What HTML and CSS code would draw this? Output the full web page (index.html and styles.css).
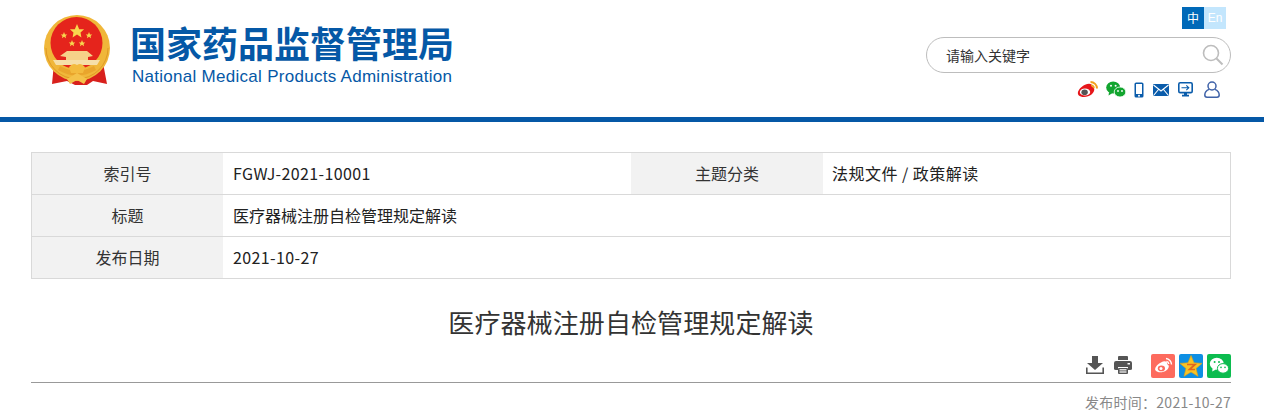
FILE: index.html
```html
<!DOCTYPE html>
<html lang="zh-CN">
<head>
<meta charset="utf-8">
<title>医疗器械注册自检管理规定解读</title>
<link rel="stylesheet" href="styles.css">
</head>
<body>
<header class="header">
  <div class="header-inner">
    <a class="brand">
      <svg class="emblem" width="68" height="72" viewBox="0 0 68 72">
        <defs>
          <path id="star" d="M0 -10 L2.9 -3.1 L9.5 -3.1 L4.7 1.2 L5.9 8.1 L0 4 L-5.9 8.1 L-4.7 1.2 L-9.5 -3.1 L-2.9 -3.1 Z" fill="#f8d64e"/>
        </defs>
        <path d="M11 48 L9 69 L24 66 L32 70 L44 70 L50 66 L64 69 L60 48 Z" fill="#d8201c"/>
        <circle cx="34" cy="33" r="33" fill="#f0b73a"/>
        <path d="M3 33 A31 31 0 0 0 65 33" fill="none" stroke="#e09a25" stroke-width="1"/>
        <circle cx="33.5" cy="28" r="26" fill="#e5241c"/>
        <path d="M17 41 L24 36 H44 L50 41 L45 42 V45 H23 V42 Z" fill="#f6d289"/>
        <path d="M10 45 H57 L54 50 H13 Z" fill="#f6dfa8"/>
        <path d="M17 51 Q34 60 51 51 L53 55 Q34 66 15 55 Z" fill="#e9a52c"/>
        <path d="M26 52 Q30 47 34 50 Q38 47 42 52 L40 58 H28 Z" fill="#f3bb3e"/>
        <path d="M24 64 L34 58 L44 64 L41 69 L34 65 L27 69 Z" fill="#f4c24a"/>
        <use href="#star" transform="translate(34 16.5) scale(.75)"/>
        <use href="#star" transform="translate(21 20.5) scale(.34)"/>
        <use href="#star" transform="translate(46 20.5) scale(.34)"/>
        <use href="#star" transform="translate(29 28.5) scale(.34)"/>
        <use href="#star" transform="translate(39 28.5) scale(.34)"/>
      </svg>
      <div class="brand-text">
        <div class="brand-cn">国家药品监督管理局</div>
        <div class="brand-en">National Medical Products Administration</div>
      </div>
    </a>
    <div class="tools">
      <div class="lang"><span class="lang-cn">中</span><span class="lang-en">En</span></div>
      <div class="search">
        <span class="search-text">请输入关键字</span>
        <svg width="22" height="22" viewBox="0 0 22 22" fill="none" stroke="#bdbdbd" stroke-width="1.6"><circle cx="9" cy="9" r="7.5"/><path d="M14.5 14.5 L20.5 20.5" stroke-width="2"/></svg>
      </div>
      <div class="socials">
        <svg class="s-weibo" width="21" height="17" viewBox="0 0 21 17"><path d="M8 3.8 C12.5 1.8 15.6 3 15.4 6 C18.4 7 17.6 11 14.5 13.6 C11 16.6 4 16.8 1.6 14.2 C-.8 11.5 3 6.2 8 3.8 Z" fill="#e6161a"/><ellipse cx="8" cy="11" rx="5.2" ry="3.6" fill="#fff"/><ellipse cx="7.6" cy="11.2" rx="3.2" ry="2.8" fill="#555"/><path d="M13.5 1 A6.5 6.5 0 0 1 20 7.5" fill="none" stroke="#f2a01e" stroke-width="2"/><path d="M14 4.4 A3 3 0 0 1 17 7.2" fill="none" stroke="#f2a01e" stroke-width="1.6"/></svg>
        <svg class="s-wechat" width="20" height="17" viewBox="0 0 20 17"><ellipse cx="7.2" cy="6.6" rx="7" ry="6" fill="#12a52f"/><path d="M3 11 L2.6 14.5 L6.5 12 Z" fill="#12a52f"/><ellipse cx="14" cy="11" rx="5.8" ry="5" fill="#12a52f" stroke="#fff" stroke-width=".8"/><circle cx="5" cy="4.8" r="1" fill="#fff"/><circle cx="9.6" cy="4.8" r="1" fill="#fff"/><circle cx="12" cy="10" r=".9" fill="#fff"/><circle cx="16" cy="10" r=".9" fill="#fff"/></svg>
        <svg class="s-phone" width="10" height="16" viewBox="0 0 10 16"><rect x=".5" y=".5" width="9" height="15" rx="1.6" fill="#0a5cab"/><rect x="2" y="2" width="6" height="10" fill="#fff"/><circle cx="5" cy="13.8" r="1" fill="#fff"/></svg>
        <svg class="s-mail" width="16" height="12" viewBox="0 0 16 12"><rect width="16" height="12" rx="1" fill="#0a5cab"/><path d="M.5 1 L8 7 L15.5 1 M.5 11.5 L5.5 5.5 M15.5 11.5 L10.5 5.5" fill="none" stroke="#fff" stroke-width="1.1"/></svg>
        <svg class="s-screen" width="15" height="15" viewBox="0 0 15 15"><rect x=".8" y=".8" width="13.4" height="9.8" rx="1.4" fill="#fff" stroke="#0a5cab" stroke-width="1.6"/><path d="M3.5 5.8 H10.5 M8.3 3.4 L10.8 5.8 L8.3 8.2" fill="none" stroke="#0a5cab" stroke-width="1.1"/><path d="M6 11 H9 V12.8 H11 V14.6 H4 V12.8 H6 Z" fill="#0a5cab"/></svg>
        <svg class="s-user" width="16" height="17" viewBox="0 0 16 17" fill="none" stroke="#3f62a8" stroke-width="1.5"><circle cx="8" cy="5" r="4"/><path d="M5.2 8.4 C2.6 9.4 .8 11.4 .8 14 Q.8 16.2 3 16.2 H13 Q15.2 16.2 15.2 14 C15.2 11.4 13.4 9.4 10.8 8.4"/></svg>
      </div>
    </div>
  </div>
</header>

<main class="main">
  <div class="meta">
    <div class="meta-label">索引号</div>
    <div class="meta-value meta-num">FGWJ-2021-10001</div>
    <div class="meta-label">主题分类</div>
    <div class="meta-value meta-last">法规文件 / 政策解读</div>
    <div class="meta-label">标题</div>
    <div class="meta-value meta-wide">医疗器械注册自检管理规定解读</div>
    <div class="meta-label">发布日期</div>
    <div class="meta-value meta-wide meta-num">2021-10-27</div>
  </div>

  <h1 class="title">医疗器械注册自检管理规定解读</h1>

  <div class="actions">
    <svg class="a-download" width="18" height="18" viewBox="0 0 18 18"><path d="M6 0 H12 V7 H17 L9 14 L1 7 H6 Z" fill="#555"/><path d="M.8 11.5 V17.2 H17.2 V11.5" fill="none" stroke="#555" stroke-width="1.6"/></svg>
    <svg class="a-print" width="18" height="18" viewBox="0 0 18 18"><path d="M5 0 H13 Q14 0 14 1 V4 H4 V1 Q4 0 5 0 Z" fill="#555"/><path d="M2 5 H16 Q18 5 18 7 V13 Q18 14 16 14 H14 V11 H4 V14 H2 Q0 14 0 13 V7 Q0 5 2 5 Z" fill="#555"/><rect x="4" y="12" width="10" height="6" rx="1" fill="#555"/><rect x="5.5" y="13.2" width="7" height="1.2" fill="#fff"/><rect x="5.5" y="15.4" width="7" height="1.2" fill="#fff"/><rect x="13.5" y="7" width="2.5" height="1.5" fill="#fff"/></svg>
    <span class="share s1"><svg width="24" height="24" viewBox="0 0 24 24"><rect width="24" height="24" rx="2" fill="#fd6b5e"/><path d="M10 8.5 C13.5 6.5 16.5 7.2 16.3 10.2 C18.5 11 18.4 14 15.5 16.3 C12 19 6.5 19 4.6 16.6 C3 14.4 6 10.5 10 8.5 Z" fill="#fff"/><ellipse cx="10.4" cy="14.4" rx="3.6" ry="2.8" fill="#fd6b5e"/><circle cx="10" cy="14.6" r="1.5" fill="#fff"/><path d="M15 4.5 A6 6 0 0 1 20.5 10.5 M15.4 7.4 A3 3 0 0 1 17.8 10" fill="none" stroke="#fff" stroke-width="1.4"/></svg></span>
    <span class="share s2"><svg width="24" height="24" viewBox="0 0 24 24"><rect width="24" height="24" rx="2" fill="#0e8fe3"/><path d="M12 1.5 L15 8.8 L23 9.4 L17 14.4 L19 22.3 L12 18 L5 22.3 L7 14.4 L1 9.4 L9 8.8 Z" fill="#f7c325" stroke="#e7a313" stroke-width=".6"/><path d="M8 10.5 H16 L10.5 15.5 H16" fill="none" stroke="#e2651e" stroke-width="1.7"/></svg></span>
    <span class="share s3"><svg width="24" height="24" viewBox="0 0 24 24"><rect width="24" height="24" rx="2" fill="#0cbc4f"/><ellipse cx="9.8" cy="9.8" rx="7" ry="6" fill="#fff"/><path d="M5.6 14 L5.2 17.4 L9 15.4 Z" fill="#fff"/><ellipse cx="16" cy="14.4" rx="5.6" ry="4.8" fill="#fff" stroke="#0cbc4f" stroke-width="1"/><circle cx="7.6" cy="8" r="1" fill="#0cbc4f"/><circle cx="12" cy="8" r="1" fill="#0cbc4f"/><circle cx="14" cy="13.4" r=".8" fill="#0cbc4f"/><circle cx="18" cy="13.4" r=".8" fill="#0cbc4f"/></svg></span>
  </div>

  <div class="date">发布时间：2021-10-27</div>
</main>
</body>
</html>
```
FILE: styles.css
```css
* { box-sizing: border-box; }
html, body { margin: 0; padding: 0; }
body {
  background: #fff;
  color: #333;
  font-family: "Noto Sans CJK SC", "Liberation Sans", sans-serif;
  overflow: hidden;
}
.header {
  height: 122px;
  border-bottom: 5px solid #0558a6;
}
.header-inner {
  display: flex;
  justify-content: space-between;
  padding: 0 33px 0 43px;
  height: 117px;
}
.brand { display: flex; align-items: flex-start; }
.emblem { margin-top: 15px; }
.brand-text { margin-left: 21px; }
.brand-cn {
  margin-top: 19px;
  margin-left: -2px;
  font-size: 36px;
  line-height: 46px;
  height: 46px;
  font-weight: 700;
  color: #0558a6;
  white-space: nowrap;
}
.brand-en {
  margin-top: 2px;
  font-family: "Liberation Sans", sans-serif;
  font-size: 17px;
  line-height: 20px;
  color: #0558a6;
  letter-spacing: .28px;
  white-space: nowrap;
}
.tools {
  width: 305px;
  display: flex;
  flex-direction: column;
  align-items: flex-end;
}
.lang {
  margin-top: 7px;
  margin-right: 5px;
  display: flex;
  height: 22px;
  font-size: 12px;
  line-height: 22px;
  color: #fff;
}
.lang span { width: 22px; text-align: center; }
.lang-cn { background: #0069b8; }
.lang-en { background: #c3e6fd; font-family: "Liberation Sans", sans-serif; }
.search {
  margin-top: 8px;
  width: 305px;
  height: 36px;
  border: 1px solid #bdbdbd;
  border-radius: 18px;
  display: flex;
  align-items: center;
  justify-content: space-between;
  padding: 0 6px 0 19px;
}
.search-text { font-size: 14px; color: #333; }
.socials {
  margin-top: 7px;
  margin-right: 11px;
  display: flex;
  align-items: center;
  height: 19px;
}
.s-wechat { margin-left: 8px; }
.s-phone { margin-left: 8px; }
.s-mail { margin-left: 9px; }
.s-screen { margin-left: 9px; }
.s-user { margin-left: 11px; }

.main { padding: 30px 33px 0 31px; }
.meta {
  display: grid;
  grid-template-columns: 191px 408px 192px 1fr;
  border: 1px solid #d9d9d9;
  border-bottom: 0;
  font-size: 16px;
}
.meta-label, .meta-value {
  height: 42px;
  line-height: 41px;
  border-bottom: 1px solid #d9d9d9;
}
.meta-label { background: #f2f2f2; text-align: center; }
.meta-value { padding-left: 10px; color: #222; }
.meta-num { letter-spacing: .38px; }
.meta-wide { grid-column: 2 / 5; }
.meta-last { padding-left: 9px; letter-spacing: .48px; }
.title {
  margin: 24px 0 0;
  font-size: 26px;
  font-weight: 400;
  line-height: 38px;
  height: 38px;
  text-align: center;
  letter-spacing: .1px;
  color: #333;
}
.actions {
  margin-top: 13px;
  height: 29px;
  border-bottom: 1px solid #999;
  display: flex;
  justify-content: flex-end;
  align-items: flex-start;
}
.actions svg { display: block; }
.a-print { margin-left: 10px; margin-top: 2px; }
.a-download { margin-top: 2px; }
.share { margin-left: 4px; }
.s1 { margin-left: 19px; }
.date {
  margin-top: 9px;
  text-align: right;
  font-size: 14px;
  line-height: 20px;
  letter-spacing: .28px;
  color: #888;
  white-space: nowrap;
}
```
